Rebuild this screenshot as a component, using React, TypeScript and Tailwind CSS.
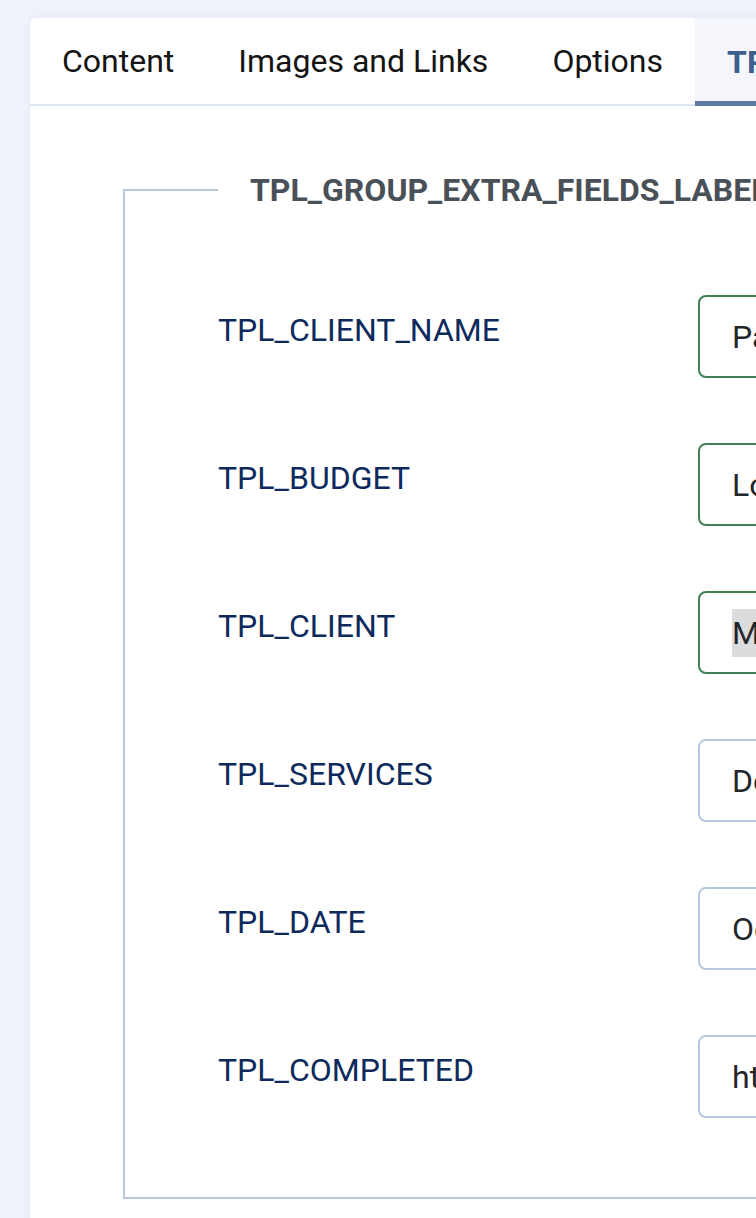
import React from 'react'

const tabs = ['Content', 'Images and Links', 'Options']

const fields = [
  { label: 'TPL_CLIENT_NAME', value: 'Pablo Martinez', valid: true },
  { label: 'TPL_BUDGET', value: 'Lorem ipsum', valid: true },
  { label: 'TPL_CLIENT', value: 'Mark', valid: true, mark: true },
  { label: 'TPL_SERVICES', value: 'Design, Branding', valid: false },
  { label: 'TPL_DATE', value: 'October 2023', valid: false },
  { label: 'TPL_COMPLETED', value: 'https://example.com', valid: false },
]

export default function App() {
  return (
    <div
      className="w-[756px] h-[1218px] overflow-hidden bg-[#eef2fa]"
      style={{ fontFamily: 'Roboto, "Noto Sans", sans-serif' }}
    >
      <div className="pt-[18px] pl-[30px]">
        <div className="w-[1400px] bg-white rounded-tl-[6px] shadow-[0_0_6px_rgba(30,60,120,0.06)] pb-[80px]">
          {/* tabs */}
          <div className="flex h-[88px] border-b-2 border-[#dfe7f1]">
            {tabs.map(t => (
              <button
                key={t}
                className="px-[32px] text-[32px] leading-[48px] text-[#141414] flex items-center"
              >
                {t}
              </button>
            ))}
            <button className="px-[32px] text-[32px] leading-[48px] font-bold text-[#3d5f8c] bg-[#f4f6fb] border-b-[5px] border-[#5d7ca4] mb-[-2px] flex items-center pt-[5px]">
              TPL_GROUP_EXTRA_FIELDS
            </button>
          </div>

          <div className="pl-[93px] pt-[60px]">
            <fieldset className="w-[1200px] border-2 border-[#b7c8de] pl-[93px] pt-[81px] pb-[79px]">
              <legend className="px-[32px] text-[32px] leading-[48px] font-bold text-[#4a5057]">
                TPL_GROUP_EXTRA_FIELDS_LABEL
              </legend>
              <div className="flex flex-col gap-[65px]">
                {fields.map(f => (
                  <div key={f.label} className="flex items-start">
                    <label className="w-[480px] shrink-0 pt-[11px] text-[32px] leading-[48px] text-[#0e2a5c]">
                      {f.label}
                    </label>
                    <div
                      className={`w-[600px] h-[83px] rounded-[8px] border-2 px-[32px] flex items-center text-[32px] leading-[48px] text-[#22262a] ${
                        f.valid ? 'border-[#427f56]' : 'border-[#b7c8de]'
                      }`}
                    >
                      {f.mark ? (
                        <span className="bg-[#dcdcdc]">{f.value}</span>
                      ) : (
                        f.value
                      )}
                    </div>
                  </div>
                ))}
              </div>
            </fieldset>
          </div>
        </div>
      </div>
    </div>
  )
}
